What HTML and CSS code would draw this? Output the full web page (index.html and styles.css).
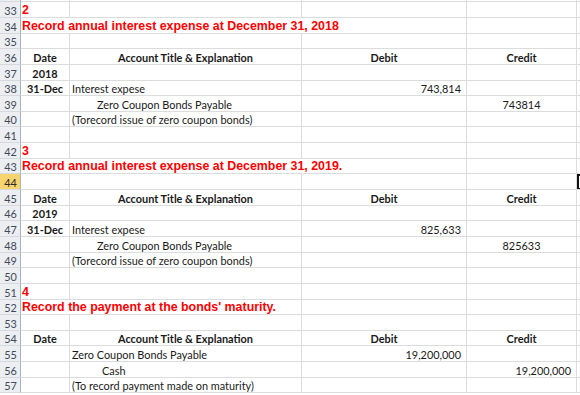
FILE: index.html
```html
<!DOCTYPE html>
<html>
<head>
<meta charset="utf-8">
<link rel="stylesheet" href="styles.css">
</head>
<body>
<div class="sheet">
  <div class="rh top"></div><div class="c top"></div><div class="c top"></div><div class="c top"></div><div class="c top"></div><div class="c top e"></div>

  <div class="rh">33</div><div class="c red">2</div><div class="c"></div><div class="c"></div><div class="c"></div><div class="c e"></div>
  <div class="rh">34</div><div class="c red span3">Record annual interest expense at December 31, 2018</div><div class="c"></div><div class="c e"></div>
  <div class="rh">35</div><div class="c"></div><div class="c"></div><div class="c"></div><div class="c"></div><div class="c e"></div>
  <div class="rh">36</div><div class="c b ctr">Date</div><div class="c b ctr">Account Title &amp; Explanation</div><div class="c b ctr">Debit</div><div class="c b ctr">Credit</div><div class="c e"></div>
  <div class="rh">37</div><div class="c b ctr">2018</div><div class="c"></div><div class="c"></div><div class="c"></div><div class="c e"></div>
  <div class="rh">38</div><div class="c b ctr">31-Dec</div><div class="c">Interest expese</div><div class="c num">743,814</div><div class="c"></div><div class="c e"></div>
  <div class="rh">39</div><div class="c"></div><div class="c ind">Zero Coupon Bonds Payable</div><div class="c"></div><div class="c ctr">743814</div><div class="c e"></div>
  <div class="rh">40</div><div class="c"></div><div class="c">(Torecord issue of zero coupon bonds)</div><div class="c"></div><div class="c"></div><div class="c e"></div>
  <div class="rh">41</div><div class="c"></div><div class="c"></div><div class="c"></div><div class="c"></div><div class="c e"></div>

  <div class="rh">42</div><div class="c red">3</div><div class="c"></div><div class="c"></div><div class="c"></div><div class="c e"></div>
  <div class="rh">43</div><div class="c red span3">Record annual interest expense at December 31, 2019.</div><div class="c"></div><div class="c e"></div>
  <div class="rh sel">44</div><div class="c"></div><div class="c"></div><div class="c"></div><div class="c"></div><div class="c e active"></div>
  <div class="rh">45</div><div class="c b ctr">Date</div><div class="c b ctr">Account Title &amp; Explanation</div><div class="c b ctr">Debit</div><div class="c b ctr">Credit</div><div class="c e"></div>
  <div class="rh">46</div><div class="c b ctr">2019</div><div class="c"></div><div class="c"></div><div class="c"></div><div class="c e"></div>
  <div class="rh">47</div><div class="c b ctr">31-Dec</div><div class="c">Interest expese</div><div class="c num">825,633</div><div class="c"></div><div class="c e"></div>
  <div class="rh">48</div><div class="c"></div><div class="c ind">Zero Coupon Bonds Payable</div><div class="c"></div><div class="c ctr">825633</div><div class="c e"></div>
  <div class="rh">49</div><div class="c"></div><div class="c">(Torecord issue of zero coupon bonds)</div><div class="c"></div><div class="c"></div><div class="c e"></div>
  <div class="rh">50</div><div class="c"></div><div class="c"></div><div class="c"></div><div class="c"></div><div class="c e"></div>

  <div class="rh">51</div><div class="c red">4</div><div class="c"></div><div class="c"></div><div class="c"></div><div class="c e"></div>
  <div class="rh">52</div><div class="c red span2">Record the payment at the bonds' maturity.</div><div class="c"></div><div class="c"></div><div class="c e"></div>
  <div class="rh">53</div><div class="c"></div><div class="c"></div><div class="c"></div><div class="c"></div><div class="c e"></div>
  <div class="rh">54</div><div class="c b ctr">Date</div><div class="c b ctr">Account Title &amp; Explanation</div><div class="c b ctr">Debit</div><div class="c b ctr">Credit</div><div class="c e"></div>
  <div class="rh">55</div><div class="c"></div><div class="c">Zero Coupon Bonds Payable</div><div class="c num">19,200,000</div><div class="c"></div><div class="c e"></div>
  <div class="rh">56</div><div class="c"></div><div class="c ind2">Cash</div><div class="c"></div><div class="c num">19,200,000</div><div class="c e"></div>
  <div class="rh">57</div><div class="c"></div><div class="c">(To record payment made on maturity)</div><div class="c"></div><div class="c"></div><div class="c e"></div>
</div>
</body>
</html>
```

FILE: styles.css
```css
html, body {
  margin: 0;
  padding: 0;
  background: #ffffff;
}
.sheet {
  display: grid;
  grid-template-columns: 21px 49px 232px 165px 110px 1fr;
  grid-template-rows: 2.35px;
  grid-auto-rows: 15.65px;
  width: 580px;
  font-family: Lato, "Liberation Sans", sans-serif;
  font-size: 10.9px;
  color: #1a1a1a;
}
.rh, .c {
  box-sizing: border-box;
  border-bottom: 1px solid #dadcdd;
  border-right: 1px solid #dadcdd;
  white-space: nowrap;
  overflow: visible;
  display: flex;
  align-items: flex-end;
  padding-bottom: 0;
  line-height: 12px;
}
.rh {
  background: #eceef1;
  border-bottom: 1px solid #d5d9de;
  border-right: 1px solid #a9b3bf;
  justify-content: center;
  color: #3e4a5a;
  font-size: 10.9px;
  padding-left: 1px;
}
.rh.sel {
  background: #f7d46e;
  color: #2b2b2b;
}
.top {
  padding: 0;
}
.c {
  padding-left: 2px;
  padding-right: 2px;
}
.red {
  font-family: "Liberation Sans", Arial, sans-serif;
  font-weight: bold;
  font-size: 12.4px;
  line-height: 13px;
  color: #ff0000;
  padding-left: 1px;
}
.span3 { grid-column: span 3; }
.span2 { grid-column: span 2; }
.b { font-weight: bold; }
.ctr { justify-content: center; }
.num { justify-content: flex-end; padding-right: 5px; }
.ind { padding-left: 27px; }
.ind2 { padding-left: 32px; }
.e { border-right: none; }
.active {
  box-shadow: inset 2px 2px 0 #111111, inset 0 -1px 0 #111111;
}
```
